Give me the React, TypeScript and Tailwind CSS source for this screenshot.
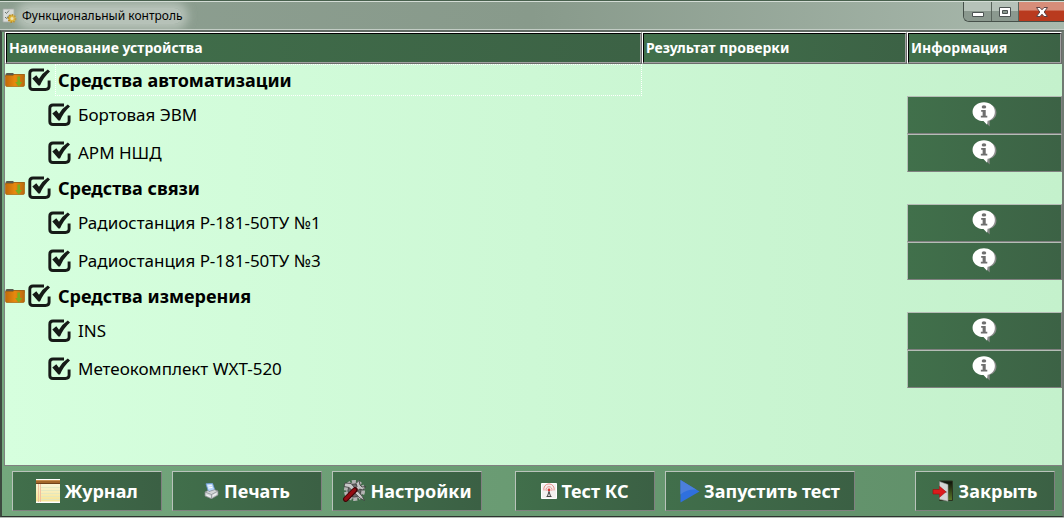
import React from "react";

type Device = { name: string };
type Group = { title: string; devices: Device[] };

const groups: Group[] = [
  { title: "Средства автоматизации", devices: [{ name: "Бортовая ЭВМ" }, { name: "АРМ НШД" }] },
  { title: "Средства связи", devices: [{ name: "Радиостанция Р-181-50ТУ №1" }, { name: "Радиостанция Р-181-50ТУ №3" }] },
  { title: "Средства измерения", devices: [{ name: "INS" }, { name: "Метеокомплект WXT-520" }] },
];

function AppIcon() {
  return (
    <svg width="16" height="16" viewBox="0 0 16 16" aria-hidden="true">
      <path d="M1 1h11v13H1z" fill="#d9dcda" stroke="#a5aaa6" strokeWidth=".8" />
      <path d="M3 4l1.500 1.500L7 2.500M3 9l1.500 1.500L7 7.500" stroke="#6d7570" fill="none" />
      <circle cx="10" cy="10.500" r="3.600" fill="#e6b52c" stroke="#b98a1c" strokeWidth="1.800" strokeDasharray="1.600 1.100" />
      <circle cx="10" cy="10.500" r="1.500" fill="#f8e9b0" />
    </svg>
  );
}

function FolderIcon() {
  return (
    <svg width="20" height="16" viewBox="0 0 20 16" aria-hidden="true" className="shrink-0">
      <defs>
        <linearGradient id="folder" x1="0" y1="0" x2="1" y2="0">
          <stop offset="0" stopColor="#c26a0a" />
          <stop offset=".5" stopColor="#e8890e" />
          <stop offset="1" stopColor="#b8690f" />
        </linearGradient>
      </defs>
      <path d="M.5 2.500Q.5 1 2 1h6l1 1h10.500v3H.5z" fill="#5b5a4c" />
      <path d="M.5 3.500h7.500l1-1h10.500V13q0 1.500-1.500 1.500H2Q.5 14.500 .5 13z" fill="url(#folder)" stroke="#a8650e" strokeWidth=".7" />
      <path d="M12.400 4.500h2.600V10h2.200l-3.500 4.700L10.200 10h2.200z" fill="#7cae1e" />
    </svg>
  );
}

function Tick({ label }: { label: string }) {
  return (
    <span className="grid h-6 w-6 shrink-0 place-items-center">
      <input
        type="checkbox"
        defaultChecked
        aria-label={label}
        className="peer col-start-1 row-start-1 h-6 w-6 appearance-none"
      />
      <svg
        width="24"
        height="24"
        viewBox="0 0 24 24"
        aria-hidden="true"
        className="pointer-events-none col-start-1 row-start-1 [&>.mark]:opacity-0 peer-checked:[&>.mark]:opacity-100"
      >
        <path d="M16 2H5Q1.800 2 1.800 5.200v13.300q0 3 3.200 3h12.500q3.600 0 3.600-3.200V12.500" fill="none" stroke="#161a17" strokeWidth="2.900" />
        <path className="mark" d="M4.300 10.500l4-3.200 2.700 3.400Q14 5.200 19.800 1.400l2.200 2Q15.500 9 12 17.500h-1.600z" fill="#161a17" />
      </svg>
    </span>
  );
}

function InfoIcon() {
  return (
    <svg width="28" height="28" viewBox="0 0 27 27" aria-hidden="true">
      <path d="M14 2.500c6 0 10.500 3.600 10.500 8.600 0 4-2.500 7-6.500 8v5.400l-5-5.200C7 18.500 5 15 5 11z" fill="#8c8c8c" />
      <path d="M12.500 1.200C18.500 1.200 23 5 23 10.300c0 4.500-2.800 7.800-7 8.800l-.5 3.900-3.500-3.600C6 19.200 1.500 15.500 1.500 10.300S6.500 1.200 12.500 1.200z" fill="#fff" />
      <ellipse cx="12.500" cy="5.700" rx="2.200" ry="1.600" fill="#6f6f6f" />
      <path d="M9.800 8.700h4.400v5.500h1.500v1.600H9.500v-1.600h1.700v-3.900H9.800z" fill="#6f6f6f" />
    </svg>
  );
}

function JournalIcon() {
  return (
    <svg width="24" height="24" viewBox="0 0 24 24" aria-hidden="true">
      <defs>
        <linearGradient id="pad" x1="0" y1="0" x2="0" y2="1">
          <stop offset="0" stopColor="#fbf6da" />
          <stop offset="1" stopColor="#f7e493" />
        </linearGradient>
      </defs>
      <path d="M0 0h24v24H0z" fill="#fff" />
      <path d="M0 4h24v18.500H0z" fill="url(#pad)" />
      <path d="M0 1h24v4H0z" fill="#a3662a" />
      <path d="M0 1.500h24" stroke="#c98f4e" />
      <path d="M0 4.500h24" stroke="#70421a" />
      <path d="M5 8.500h19M5 11.500h19M5 14.500h19M5 17.500h19M5 20.500h19" stroke="#dfe6c0" strokeWidth=".8" />
      <path d="M2.500 5v18M4.500 5v18" stroke="#f0b596" strokeWidth=".8" />
    </svg>
  );
}

function PrinterIcon() {
  return (
    <svg width="16" height="16" viewBox="0 0 16 16" aria-hidden="true">
      <path d="M2 .8l6.500-.5L11 7.500 4.500 9z" fill="#b9d7fa" stroke="#6c9bd6" strokeWidth=".8" />
      <path d="M3.800 3l4-.4M4.400 5l4-.6" stroke="#fff" />
      <path d="M1 9l3-1.500 1 1 5.500-1.800L14 8v4l-6.500 3.800L1 13z" fill="#d4d6d8" stroke="#85898d" strokeWidth=".7" />
      <path d="M1 9l6.500 2.500L14 8M7.500 11.500v4" stroke="#84888c" strokeWidth=".7" fill="none" />
      <path d="M2.500 12l4 1.600M9 12.500l3.500-1.800" stroke="#f8f8f8" />
    </svg>
  );
}

function SettingsIcon() {
  return (
    <svg width="24" height="24" viewBox="0 0 24 24" aria-hidden="true">
      <circle cx="12.500" cy="11.500" r="8.600" fill="#8b8b8b" stroke="#b4b4b4" strokeWidth="4" strokeDasharray="3.800 1.600" />
      <circle cx="12.500" cy="11.500" r="6.500" fill="#6b6b6b" stroke="#4a4a4a" />
      <path d="M3 4l6 .5 11 12.500 2.500 4.500-4.500-2.500L7 8.500 2 7.500z" fill="#c9c9c9" stroke="#3c3c3c" strokeWidth=".8" />
      <path d="M17 1.500l-3 3 1 3-3 3 2.500 2.500 3-3 3.500 1 2.500-3.500-3.500 .5-2-2z" fill="#c4c4c4" stroke="#333" strokeWidth=".8" />
      <path d="M3.800 20.200L13 10.800" stroke="#3f0507" strokeWidth="5.500" strokeLinecap="round" />
      <path d="M3.800 20L12.500 11" stroke="#930c12" strokeWidth="3.400" strokeLinecap="round" />
    </svg>
  );
}

function AntennaIcon() {
  return (
    <svg width="16" height="16" viewBox="0 0 16 16" aria-hidden="true">
      <path d="M.5.500h15v15H.5z" fill="#f3f1ef" stroke="#fff" />
      <path d="M3 7.500a5.200 5.200 0 1 1 10 0M5.200 7.800a3 3 0 1 1 5.600 0" fill="none" stroke="#eb8f8b" strokeWidth="1" />
      <circle cx="8" cy="7" r="1.400" fill="#d73833" />
      <path d="M8 8.500l-1.600 5M8 8.500l1.600 5M5.500 13.500h5" stroke="#444" fill="none" />
    </svg>
  );
}

function PlayIcon() {
  return (
    <svg width="20" height="24" viewBox="0 0 20 24" aria-hidden="true">
      <path d="M.5 1L19.500 12.500.5 23.500z" fill="#2f70de" />
      <path d="M.5 1l16 9.700Q7 10 .5 15.500z" fill="#4c7fdb" />
    </svg>
  );
}

function ExitIcon() {
  return (
    <svg width="22" height="22" viewBox="0 0 22 22" aria-hidden="true">
      <defs>
        <linearGradient id="doorway" x1="0" y1="0" x2="0" y2="1">
          <stop offset="0" stopColor="#0c0f09" />
          <stop offset="1" stopColor="#5d7a28" />
        </linearGradient>
      </defs>
      <path d="M7.500 1h13v19.500h-13z" fill="url(#doorway)" stroke="#2a3420" />
      <path d="M7.500 1.500l8.500 3v16.700l-8.500-2z" fill="#d4d6d4" stroke="#8c908c" strokeWidth=".6" />
      <circle cx="14" cy="12" r=".8" fill="#666" />
      <path d="M1 9.500h6.500V6.300l6.500 5.500-6.500 5.500V14H1z" fill="#dd1c1c" stroke="#9e0c0c" strokeWidth=".6" />
    </svg>
  );
}

function ToolButton({ className, icon, children }: { className: string; icon: React.ReactNode; children: string }) {
  return (
    <button
      type="button"
      className={`flex h-10 shrink-0 items-center justify-center gap-1 border border-t-[#b9c4bb] border-l-[#b9c4bb] border-r-[#808080] border-b-[#808080] bg-linear-to-r from-[#416f4b] to-[#3b6044] text-lg font-bold whitespace-nowrap text-white ${className}`}
    >
      {icon}
      {children}
    </button>
  );
}

const headCell =
  "h-8 border border-t-white border-l-white border-r-[#6b6b6b] border-b-[#6b6b6b] p-0 text-left font-bold";
const headInner =
  "flex h-full items-center border border-t-black border-l-black border-r-[#a0a0a0] border-b-[#a0a0a0] bg-linear-to-r from-[#41704b] to-[#3c6245] pl-0.5";

export default function App() {
  return (
    <div className="flex min-h-screen flex-col border-t border-b border-t-[#48604d] border-b-[#b4bab5] bg-[#8fa295] font-['Noto_Sans','DejaVu_Sans',sans-serif] text-black">
      <header className="flex h-[29px] items-start justify-between overflow-hidden border-t border-b border-t-[#d3dcd5] border-b-[#c3cdc5] bg-linear-to-r from-[#8d9f91] via-[#889a8b] to-[#a9b9ad]">
        <div className="flex h-7 items-center gap-1 pl-0.5">
          <AppIcon />
          <h1 className="rounded-full bg-[#c0cbc2]/80 text-xs shadow-[0_0_10px_6px] shadow-[#c0cbc2]/80">Функциональный контроль</h1>
        </div>
        <div className="flex h-5 overflow-hidden rounded-bl-md border border-t-0 border-r-0 border-[#46504a]">
          <button type="button" aria-label="Свернуть" className="flex w-7 items-center justify-center border-r border-[#59645c] bg-linear-to-b from-[#b6c2b9] from-50% to-[#8b998f] to-50%">
            <svg width="14" height="12" viewBox="0 0 14 12" aria-hidden="true"><path d="M1.500 6.500h11v4h-11z" fill="#fff" stroke="#4c5352" /></svg>
          </button>
          <button type="button" aria-label="Развернуть" className="flex w-[27px] items-center justify-center border-r border-[#59645c] bg-linear-to-b from-[#b6c2b9] from-50% to-[#8b998f] to-50%">
            <svg width="14" height="12" viewBox="0 0 14 12" aria-hidden="true"><path d="M1.500 1.500h11v9h-11z" fill="#fff" stroke="#4c5352" /><path d="M4.500 4.500h5v3h-5z" fill="#8b998f" stroke="#4c5352" /></svg>
          </button>
          <button type="button" aria-label="Закрыть окно" className="flex w-[45px] items-center justify-center bg-linear-to-b from-[#d68d79] from-40% to-[#b93a1e] to-50%">
            <svg width="14" height="12" viewBox="0 0 14 12" aria-hidden="true"><path d="M1.500 1.500h3.500l2 2.300 2-2.300h3.500L9.200 6l3.300 4.500H9L7 8.200l-2 2.300H1.500L4.800 6z" fill="#fff" stroke="#5c4344" /></svg>
          </button>
        </div>
      </header>

      <div className="flex grow flex-col border-x-2 border-t-2 border-b border-[#3d4a40] border-t-[#626c65] border-r-[#707a72] border-b-[#2c332e] bg-linear-to-r from-[#74a77d] to-[#5f8e68]">
        <main className="ml-0.5 grow border-b border-l border-[#808080] bg-linear-to-r from-[#d6ffde] to-[#c4f1cc]">
          <table className="w-full table-fixed border-separate border-spacing-0">
            <colgroup>
              <col />
              <col className="w-[265px]" />
              <col className="w-[155px]" />
            </colgroup>
            <thead className="text-sm text-white">
              <tr className="h-8">
                <th className={headCell}><div className={headInner}>Наименование устройства</div></th>
                <th className={headCell}><div className={headInner}>Результат проверки</div></th>
                <th className={headCell}><div className={headInner}>Информация</div></th>
              </tr>
            </thead>
            <tbody>
              {groups.map((group, index) => (
                <React.Fragment key={group.title}>
                  <tr className="h-8">
                    <td className="p-0">
                      <div className="flex h-8 items-center">
                        <FolderIcon />
                        <span className="ml-[3px] flex"><Tick label={group.title} /></span>
                        <span className={`ml-[3px] flex h-8 grow items-center border border-dotted pl-0.5 text-lg font-bold ${index === 0 ? "border-white" : "border-transparent"}`}>
                          {group.title}
                        </span>
                      </div>
                    </td>
                    <td className="p-0" />
                    <td className="p-0" />
                  </tr>
                  {group.devices.map((device) => (
                    <tr key={device.name} className="h-[38px]">
                      <td className="p-0">
                        <label className="flex items-center gap-1.5 pl-[43px] text-[17px]">
                          <Tick label={device.name} />
                          {device.name}
                        </label>
                      </td>
                      <td className="p-0" />
                      <td className="p-0">
                        <button
                          type="button"
                          aria-label={`Информация: ${device.name}`}
                          className="flex h-[38px] w-full items-center justify-center border border-t-[#b5bdb6] border-l-[#b5bdb6] border-r-[#808080] border-b-[#808080] bg-linear-to-r from-[#41704b] to-[#3c6245]"
                        >
                          <InfoIcon />
                        </button>
                      </td>
                    </tr>
                  ))}
                </React.Fragment>
              ))}
            </tbody>
          </table>
        </main>

        <footer className="flex items-center gap-2.5 py-[5px] pr-[7px] pl-2.5">
          <ToolButton className="w-[150px]" icon={<JournalIcon />}>Журнал</ToolButton>
          <ToolButton className="w-[150px]" icon={<PrinterIcon />}>Печать</ToolButton>
          <ToolButton className="w-[150px]" icon={<SettingsIcon />}>Настройки</ToolButton>
          <ToolButton className="ml-[23px] w-[140px]" icon={<AntennaIcon />}>Тест КС</ToolButton>
          <ToolButton className="w-[190px]" icon={<PlayIcon />}>Запустить тест</ToolButton>
          <ToolButton className="ml-auto w-[140px]" icon={<ExitIcon />}>Закрыть</ToolButton>
        </footer>
      </div>
    </div>
  );
}
